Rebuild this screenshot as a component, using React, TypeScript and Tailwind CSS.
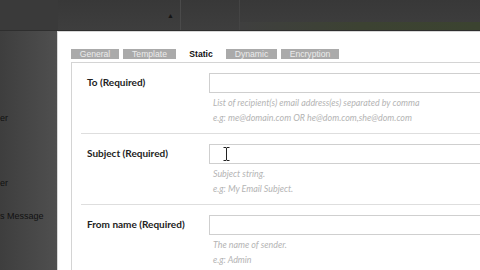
import React from 'react';

const tabs = [
  { label: 'General', w: 'w-[48px]' },
  { label: 'Template', w: 'w-[53px]' },
  { label: 'Static', w: 'w-[42px]', active: true },
  { label: 'Dynamic', w: 'w-[51px]' },
  { label: 'Encryption', w: 'w-[58px]' },
];

const fields = [
  {
    label: 'To (Required)',
    help: [
      'List of recipient(s) email address(es) separated by comma',
      'e.g: me@domain.com OR he@dom.com,she@dom.com',
    ],
  },
  {
    label: 'Subject (Required)',
    help: ['Subject string.', 'e.g: My Email Subject.'],
    cursor: true,
  },
  {
    label: 'From name (Required)',
    help: ['The name of sender.', 'e.g: Admin'],
  },
];

function Field({ label, help, cursor }: { label: string; help: string[]; cursor?: boolean }) {
  return (
    <div className="flex border-b border-[#dedede] pt-[10px] pb-[8px] pl-[6px]">
      <div className="w-[122px] shrink-0 pt-[3px] text-[10px] font-bold leading-[13px] text-[#222]">
        {label}
      </div>
      <div className="flex-1">
        <div className="relative h-[20px] w-[400px] border border-[#cfcfcf] bg-white">
          {cursor && (
            <svg className="absolute left-[13px] top-[2px]" width="7" height="14" viewBox="0 0 7 14">
              <path d="M0.5 0.5h2.5l0.5 0.6l0.5-0.6h2.5M3.5 1v12M0.5 13.5h2.5l0.5-0.6l0.5 0.6h2.5" stroke="#222" strokeWidth="1" fill="none" />
            </svg>
          )}
        </div>
        <div className="mt-[2px] pl-[4px] text-[8.9px] italic leading-[15px] text-[#b4b4b4]">
          {help.map((h) => (
            <div key={h} className="whitespace-nowrap">{h}</div>
          ))}
        </div>
      </div>
    </div>
  );
}

export default function App() {
  return (
    <div className="flex h-[270px] w-[480px] flex-col overflow-hidden bg-[#424242] font-['Lato',sans-serif]">
      {/* top bar */}
      <div className="flex h-[31px] shrink-0 border-b border-[#2e2e2e] bg-gradient-to-b from-[#383838] to-[#3e3e3e]">
        <div className="w-[58px] bg-[#3a3a3a]" />
        <div className="flex w-[122px] items-center justify-end pr-[6px]">
          <span className="text-[7px] leading-none text-[#151515]">▲</span>
        </div>
        <div className="w-[1px] bg-[#4a4a4a]" />
        <div className="w-[58px]" />
        <div className="w-[1px] bg-[#444]" />
        <div className="flex flex-1 flex-col justify-end">
          <div className="h-[8px] bg-gradient-to-r from-[#3f3f3f] via-[#3c4232] to-[#3b4330]" />
        </div>
      </div>

      <div className="flex flex-1">
        {/* background sidebar */}
        <div className="relative w-[57px] shrink-0 bg-gradient-to-r from-[#3e3e3e] to-[#4f4f4f] font-['Liberation_Sans',sans-serif] text-[9px] text-[#111]">
          <div className="absolute left-0 top-[81px] leading-[12px]">er</div>
          <div className="absolute left-0 top-[146px] leading-[12px]">er</div>
          <div className="absolute left-0 top-[179px] whitespace-nowrap leading-[12px]">s Message</div>
        </div>

        {/* dialog */}
        <div className="flex-1 border-l border-t border-[#d8d8d8] bg-white pl-[13px] pt-[17px]">
          <div className="flex h-[10px] items-stretch gap-[4px] font-['Liberation_Sans',sans-serif] text-[8.6px] leading-[10px]">
            {tabs.map((t) => (
              <div
                key={t.label}
                className={`${t.w} text-center ${
                  t.active ? 'bg-white font-bold text-[#111]' : 'bg-[#aaaaaa] text-[#ececec]'
                }`}
              >
                {t.label}
              </div>
            ))}
          </div>
          <div className="mt-[3px] h-full border-l border-t border-[#d4d4d4] pl-[9px]">
            {fields.map((f) => (
              <Field key={f.label} {...f} />
            ))}
          </div>
        </div>
      </div>
    </div>
  );
}
